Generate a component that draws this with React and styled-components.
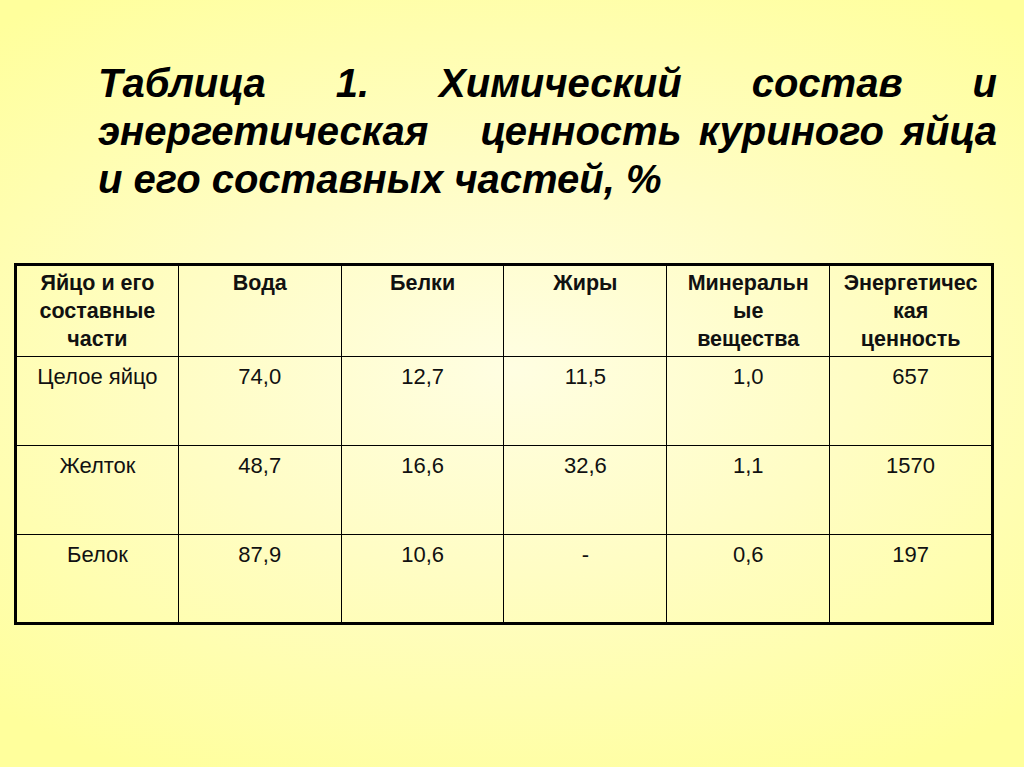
import React from "react";
import styled, { createGlobalStyle } from "styled-components";

const Global = createGlobalStyle`
  html, body { margin: 0; padding: 0; }
  body {
    width: 1024px;
    height: 767px;
    overflow: hidden;
    font-family: "Liberation Sans", Arial, sans-serif;
  }
`;

const Slide = styled.div`
  width: 1024px;
  height: 767px;
  box-sizing: border-box;
  background: radial-gradient(ellipse 75% 60% at 50% 48%, #fffee2 0%, #fffdc4 45%, #ffff9c 100%);
  padding: 59px 27px 0 14px;
  color: #000;
`;

const Title = styled.h1`
  margin: 0 0 60px 84px;
  font-family: "Liberation Sans", Arial, sans-serif;
  font-weight: bold;
  font-style: italic;
  font-size: 40px;
  line-height: 48px;
`;

const TitleLine = styled.span`
  display: block;
  text-align: ${(p) => (p.$last ? "left" : "justify")};
  text-align-last: ${(p) => (p.$last ? "left" : "justify")};
`;

const Table = styled.table`
  width: 980px;
  border-collapse: collapse;
  table-layout: fixed;
  border: 3px solid #000;
`;

const HeadCell = styled.th`
  border: 1px solid #000;
  height: 92px;
  box-sizing: border-box;
  padding: 3px 2px 0;
  vertical-align: top;
  text-align: center;
  font-weight: bold;
  font-size: 21.5px;
  line-height: 28px;
  white-space: nowrap;
  color: #111;
`;

const Cell = styled.td`
  border: 1px solid #000;
  height: 89px;
  box-sizing: border-box;
  padding: 6px 2px 0;
  vertical-align: top;
  text-align: center;
  font-size: 22px;
  line-height: 28px;
  white-space: nowrap;
  color: #111;
`;

const headers = [
  ["Яйцо и его", "составные", "части"],
  ["Вода"],
  ["Белки"],
  ["Жиры"],
  ["Минеральн", "ые", "вещества"],
  ["Энергетичес", "кая", "ценность"],
];

const rows = [
  ["Целое яйцо", "74,0", "12,7", "11,5", "1,0", "657"],
  ["Желток", "48,7", "16,6", "32,6", "1,1", "1570"],
  ["Белок", "87,9", "10,6", "-", "0,6", "197"],
];

export default function App() {
  return (
    <>
      <Global />
      <Slide>
        <Title>
          <TitleLine>Таблица 1. Химический состав и</TitleLine>
          <TitleLine>энергетическая&nbsp;&nbsp; ценность куриного яйца</TitleLine>
          <TitleLine $last>и его составных частей, %</TitleLine>
        </Title>
        <Table>
          <thead>
            <tr>
              {headers.map((h, i) => (
                <HeadCell key={i}>
                  {h.map((line, j) => (
                    <React.Fragment key={j}>
                      {j > 0 && <br />}
                      {line}
                    </React.Fragment>
                  ))}
                </HeadCell>
              ))}
            </tr>
          </thead>
          <tbody>
            {rows.map((r, i) => (
              <tr key={i}>
                {r.map((c, j) => (
                  <Cell key={j}>{c}</Cell>
                ))}
              </tr>
            ))}
          </tbody>
        </Table>
      </Slide>
    </>
  );
}
